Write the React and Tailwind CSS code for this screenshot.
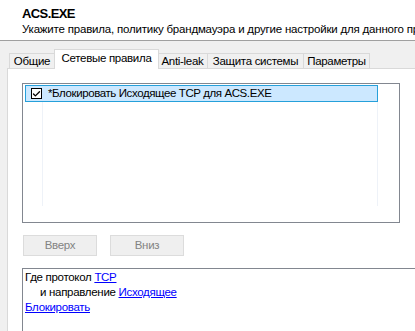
import { Check } from 'lucide-react'

const tabs = [
  { label: 'Общие', w: 'w-[46px]' },
  { label: 'Сетевые правила', w: 'w-[105px]', active: true },
  { label: 'Anti-leak', w: 'w-[51px]' },
  { label: 'Защита системы', w: 'w-[97px]' },
  { label: 'Параметры', w: 'w-[67px]' },
]

const Tab = ({ label, w, active }) =>
  active ? (
    <div className={`${w} h-[20px] -ml-px -mr-px relative z-10 border border-b-0 border-[#d9d9d9] bg-white pt-[1px] text-center leading-[15px]`}>
      {label}
    </div>
  ) : (
    <div className={`${w} h-[15px] mb-px border border-b-0 border-[#d9d9d9] bg-[#f0f0f0] -ml-px text-center leading-[14px]`}>
      {label}
    </div>
  )

const Link = ({ children }) => <span className="text-[#0000ff] underline">{children}</span>

export default function App() {
  return (
    <div className="w-[415px] h-[331px] overflow-hidden bg-[#f0f0f0] text-[11.5px] tracking-[-0.3px] text-black" style={{ fontFamily: '"Liberation Sans", Arial, sans-serif' }}>
      <div className="h-[41px] bg-white border-b border-[#a0a0a0] pl-[22px] pt-[6px] whitespace-nowrap">
        <div className="font-bold text-[13px] leading-[16px] tracking-[-0.6px]">ACS.EXE</div>
        <div className="leading-[15px] tracking-[-0.2px]">Укажите правила, политику брандмауэра и другие настройки для данного приложения</div>
      </div>

      <div className="pl-[7px] pt-[8px]">
        <div className="flex items-end h-[20px] pl-[3px] -mb-px relative z-10 whitespace-nowrap">
          {tabs.map((t) => <Tab key={t.label} {...t} />)}
        </div>
        <div className="bg-white border-l border-t border-[#d9d9d9] h-[300px] pl-[14px] pt-[14px]">
          <div className="w-[378px] h-[140px] border border-[#828790] bg-white pl-[2px] pt-px">
            <div className="flex h-[121px] w-[353px] flex-col">
              <div className="flex h-[17px] items-center border border-[#26a0da] bg-[#cce8ff]">
                <div className="ml-[5px] flex h-[11px] w-[11px] items-center justify-center border border-black bg-white">
                  <Check size={10} strokeWidth={3.5} />
                </div>
                <span className="ml-[6px] whitespace-nowrap tracking-[-0.4px]">*Блокировать Исходящее TCP для ACS.EXE</span>
              </div>
              <div className="flex flex-1">
                <div className="w-[18px] border-r border-[#eef2f8]" />
                <div className="flex-1 border-r border-[#eef2f8]" />
              </div>
            </div>
          </div>

          <div className="mt-[12px] flex gap-[13px] ml-px">
            <button className="h-[21px] w-[74px] border border-[#dcdcdc] bg-[#efefef] text-[#838383]">Вверх</button>
            <button className="h-[21px] w-[74px] border border-[#dcdcdc] bg-[#efefef] text-[#838383]">Вниз</button>
          </div>

          <div className="mt-[12px] h-[80px] border-l border-t border-[#828790] pl-[2px] pt-[1px] leading-[15px] whitespace-nowrap">
            <div>Где протокол <Link>TCP</Link></div>
            <div className="pl-[15px]">и направление <Link>Исходящее</Link></div>
            <div><Link>Блокировать</Link></div>
          </div>
        </div>
      </div>
    </div>
  )
}
